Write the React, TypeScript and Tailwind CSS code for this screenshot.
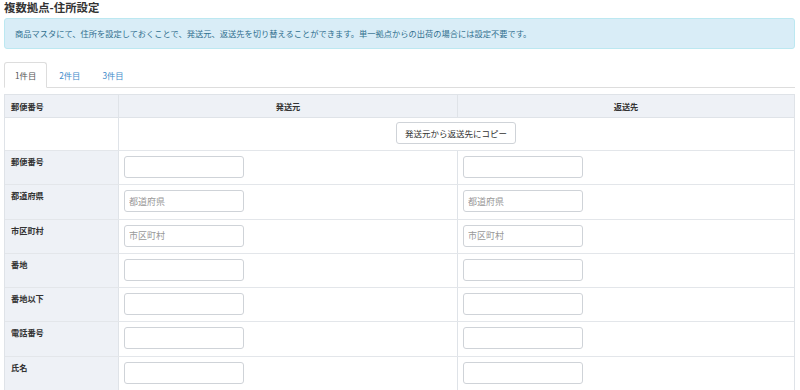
import React from "react";

const rows = [
  { label: "郵便番号", placeholder: "" },
  { label: "都道府県", placeholder: "都道府県" },
  { label: "市区町村", placeholder: "市区町村" },
  { label: "番地", placeholder: "" },
  { label: "番地以下", placeholder: "" },
  { label: "電話番号", placeholder: "" },
  { label: "氏名", placeholder: "" },
];

const TextBox = ({ placeholder }: { placeholder: string }) => (
  <input
    type="text"
    placeholder={placeholder}
    className="block w-[120px] h-[22px] border border-[#cfd3d8] rounded-[3px] bg-white px-[4px] text-[9px] text-[#555] placeholder:text-[#999] outline-none"
  />
);

const App = () => {
  return (
    <div
      className="w-[800px] h-[390px] overflow-hidden bg-white text-[#333]"
      style={{ fontFamily: '"Noto Sans CJK JP", "Noto Sans", sans-serif' }}
    >
      <div className="px-[4px]">
        <h1 className="text-[11.4px] leading-[14px] font-bold">複数拠点-住所設定</h1>

        <div className="mt-[4px] mr-[1px] h-[31px] flex items-center px-[10px] bg-[#d9edf7] border border-[#bce8f1] rounded-[3px] text-[#31708f] text-[8.25px]">
          商品マスタにて、住所を設定しておくことで、発送元、返送先を切り替えることができます。単一拠点からの出荷の場合には設定不要です。
        </div>

        <div className="mt-[13px] mr-[1px] flex border-b border-[#dddddd] h-[26px]">
          <button className="h-[26px] px-[10px] mr-[2px] text-[8.3px] text-[#555] bg-white border border-[#dddddd] border-b-white rounded-t-[3px] -mb-px">
            1件目
          </button>
          <button className="h-[26px] px-[10px] mr-[2px] text-[8.3px] text-[#428bca]">2件目</button>
          <button className="h-[26px] px-[10px] text-[8.3px] text-[#428bca]">3件目</button>
        </div>

        <div className="mt-[6px] mr-[1px] border-l border-r border-t border-[#dfe3e8]">
          <div className="grid grid-cols-[113px_339px_1fr] h-[23px] bg-[#eef1f6] text-[8.2px] font-bold border-b border-[#dfe3e8]">
            <div className="flex items-center pl-[6px]">郵便番号</div>
            <div className="flex items-center justify-center border-l border-[#dfe3e8]">発送元</div>
            <div className="flex items-center justify-center border-l border-[#dfe3e8]">返送先</div>
          </div>

          <div className="grid grid-cols-[113px_1fr] h-[32px]">
            <div className="bg-white"></div>
            <div className="flex justify-center pt-[4px] border-l border-[#dfe3e8]">
              <button className="h-[22px] px-[8px] bg-white border border-[#cfd3d8] rounded-[3px] text-[8.5px] text-[#333] ml-[-1px]">
                発送元から返送先にコピー
              </button>
            </div>
          </div>

          {rows.map((row) => (
            <div
              key={row.label}
              className="grid grid-cols-[113px_339px_1fr] h-[34.3px] border-t border-[#e3e6ea]"
            >
              <div className="bg-[#eef1f6] pl-[6px] pt-[4px] text-[8.2px] font-bold leading-[12px]">
                {row.label}
              </div>
              <div className="pl-[5px] pt-[5px] border-l border-[#dfe3e8]">
                <TextBox placeholder={row.placeholder} />
              </div>
              <div className="pl-[5px] pt-[5px] border-l border-[#dfe3e8]">
                <TextBox placeholder={row.placeholder} />
              </div>
            </div>
          ))}
        </div>
      </div>
      <div className="h-[4px] bg-[#eff1f5]"></div>
    </div>
  );
};

export default App;
